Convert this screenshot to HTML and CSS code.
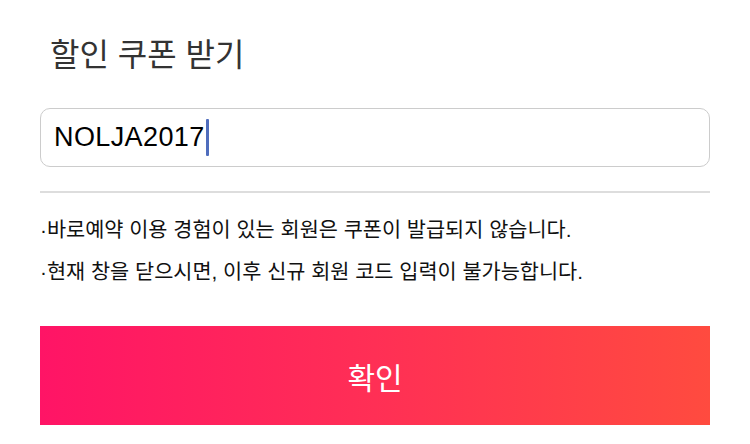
FILE: index.html
```html
<!DOCTYPE html>
<html lang="ko">
<head>
    <meta charset="UTF-8">
    <meta name="viewport" content="width=device-width, initial-scale=1.0">
    <title>할인 쿠폰 받기</title>
    <link rel="stylesheet" href="styles.css">
</head>
<body>
    <div class="coupon">
        <h1 class="title">할인 쿠폰 받기</h1>
        <div class="code-field">
            <span class="code-text">NOLJA2017</span><span class="caret"></span>
        </div>
        <hr class="divider">
        <ul class="notice">
            <li>·바로예약 이용 경험이 있는 회원은 쿠폰이 발급되지 않습니다.</li>
            <li>·현재 창을 닫으시면, 이후 신규 회원 코드 입력이 불가능합니다.</li>
        </ul>
        <button class="confirm">확인</button>
    </div>
</body>
</html>
```

FILE: styles.css
```css
body {
    margin: 0;
    background: #fff;
    font-family: 'Liberation Sans', 'Noto Sans CJK KR', sans-serif;
    color: #111;
}

.coupon {
    padding: 0 40px 0 40px;
}

.title {
    margin: 0;
    padding: 32px 0 0 10px;
    font-size: 32px;
    font-weight: 400;
    line-height: 46px;
    color: #333;
}

.code-field {
    margin-top: 30px;
    height: 57px;
    border: 1px solid #ccc;
    border-radius: 10px;
    display: flex;
    align-items: center;
    padding-left: 13px;
}

.code-text {
    font-size: 27px;
    letter-spacing: 0.4px;
    color: #000;
}

.caret {
    display: inline-block;
    width: 3px;
    height: 37px;
    margin-left: 1px;
    background: #4f6dbd;
    border-radius: 1px;
}

.divider {
    margin: 24px 0 0 0;
    border: none;
    height: 2px;
    background: #ddd;
}

.notice {
    list-style: none;
    margin: 16px 0 0 0;
    padding: 0;
    font-size: 20.8px;
    line-height: 42px;
    color: #111;
}

.confirm {
    display: block;
    width: 100%;
    height: 99px;
    margin-top: 33px;
    border: none;
    background: linear-gradient(90deg, #ff1466 0%, #ff2f55 50%, #ff4b3f 100%);
    color: #fff;
    font-family: 'Noto Sans CJK KR', sans-serif;
    font-size: 30px;
    font-weight: 400;
}
```
